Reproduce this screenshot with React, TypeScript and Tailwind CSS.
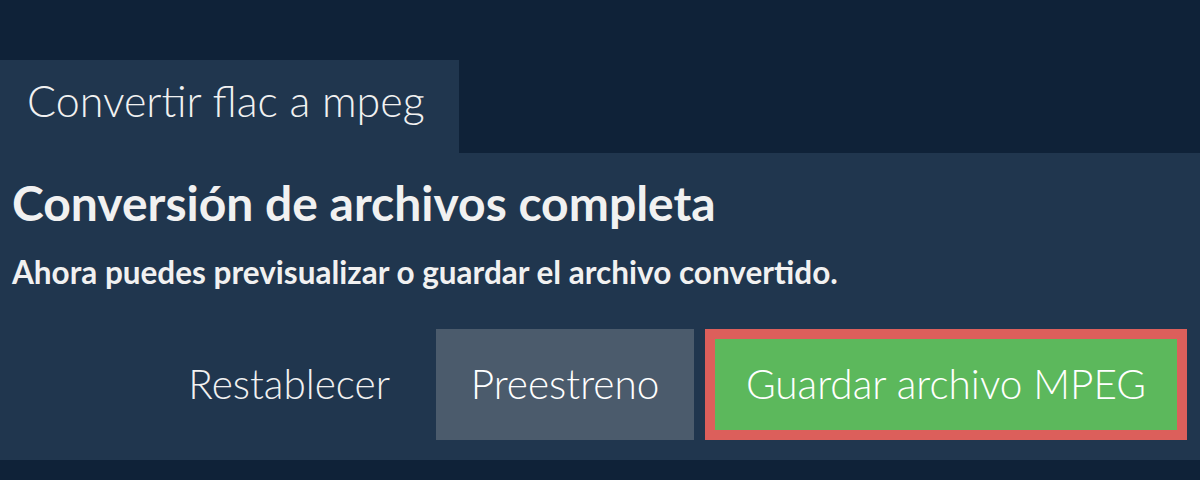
export default function App() {
  return (
    <div
      className="w-[1200px] h-[480px] bg-[#0f2238] pt-[60px] text-[#f1f1f1] overflow-hidden"
      style={{ fontFamily: "Lato, 'Noto Sans', sans-serif" }}
    >
      <div className="w-[459px] h-[93px] bg-[#20364e] pl-[27px] pt-[19px]">
        <span className="block text-[43px] font-light leading-none">Convertir flac a mpeg</span>
      </div>
      <div className="h-[307px] bg-[#20364e] px-[12px] pt-[26px]">
        <h1 className="text-[48px] font-bold leading-none">Conversión de archivos completa</h1>
        <p className="mt-[29px] text-[31.5px] font-bold leading-[32px]">
          Ahora puedes previsualizar o guardar el archivo convertido.
        </p>
        <div className="mt-[41px] flex justify-end items-center pr-[1px]">
          <button className="h-[111px] pr-[46px] text-[40.5px] font-light text-[#f1f1f1]">
            Restablecer
          </button>
          <button className="h-[111px] w-[258px] bg-[#4b5b6c] text-[40.5px] font-light text-white">
            Preestreno
          </button>
          <button className="ml-[11px] h-[111px] w-[482px] border-[10px] border-[#dc5f5b] bg-[#5cb85c] text-[40.5px] font-light text-white">
            Guardar archivo MPEG
          </button>
        </div>
      </div>
    </div>
  );
}
